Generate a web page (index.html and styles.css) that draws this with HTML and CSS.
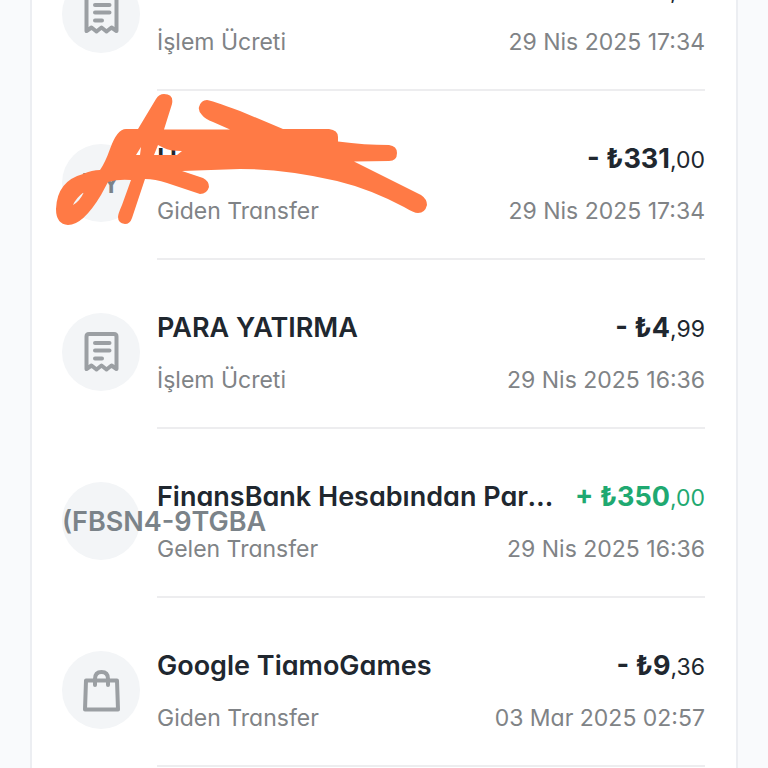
FILE: index.html
```
<!DOCTYPE html>
<html lang="tr">
<head>
  <meta charset="UTF-8">
  <meta name="viewport" content="width=device-width, initial-scale=1">
  <title>Hesap Hareketleri</title>
  <link rel="stylesheet" href="styles.css">
</head>
<body>

<!-- shared icons -->
<svg class="sprite" aria-hidden="true">
  <symbol id="receipt" viewBox="0 0 40 44">
    <path d="M5.500 39V6.500Q5.500 4 8 4H33Q35.500 4 35.500 6.500V39L30.500 35.500L25.500 39.500L20.500 35.500L15.500 39.500L10.500 35.500Z"/>
    <path d="M14 13H28.500M14 20.500H28.500M14 28.500H21"/>
  </symbol>
  <symbol id="bag" viewBox="0 0 40 44">
    <path d="M5 12.500H36L37 41.500H4Z"/>
    <path d="M14 17V11Q14 4 20.500 4Q27 4 27 11V17"/>
  </symbol>
</svg>

<main class="card">
  <ul class="list">
    <li class="item">
      <div class="avatar"><svg class="icon"><use href="#receipt"/></svg></div>
      <div class="body">
        <div class="line">
          <span class="title">PARA YATIRMA</span>
          <span class="amount">- ₺4<span class="cents">,99</span></span>
        </div>
        <div class="line sub">
          <span>İşlem Ücreti</span>
          <time>29 Nis 2025 17:34</time>
        </div>
      </div>
    </li>

    <li class="item">
      <div class="avatar"><span class="initials">HY</span></div>
      <div class="body">
        <div class="line">
          <span class="title">H</span>
          <span class="amount">- ₺331<span class="cents">,00</span></span>
        </div>
        <div class="line sub">
          <span>Giden Transfer</span>
          <time>29 Nis 2025 17:34</time>
        </div>
      </div>
      <!-- marker over the name -->
      <svg class="scribble" viewBox="50 91 380 140" aria-hidden="true">
        <path fill-rule="evenodd" d="M164 94Q174 94 172 104L164 129.500H230L213 122Q205 119 202 115Q198 111 199 107Q201 100 207 100Q210 100 240 111L283 129H329Q338 130 338 137V141.500Q365 145 389 145Q397 146 397 153Q397 161 389 161L354 161.500L387 178L421 195Q427 199 427 205Q425 213 418 213Q414 213 404 207Q370 189 337 181Q285 169 240 169L182 171L203 178Q209 181 209 187Q207 194 200 194L167 183Q155 179 145 179L132 218Q130 224 125 224Q118 223 118 217Q118 214 122 205L131 180Q118 179 108 182L101 195Q83 225 68 225Q56 224 56 209Q57 181 83 174Q92 170 100 170Q105 163 110 149Q117 129 126 129H138L156 99Q159 94 164 94ZM84 192Q76 198 73 205Q80 201 84 192ZM141 147L136 155H140ZM158 145L154 155H177L182 151Q169 151 164 148Z"/>
      </svg>
    </li>

    <li class="item">
      <div class="avatar"><svg class="icon"><use href="#receipt"/></svg></div>
      <div class="body">
        <div class="line">
          <span class="title">PARA YATIRMA</span>
          <span class="amount">- ₺4<span class="cents">,99</span></span>
        </div>
        <div class="line sub">
          <span>İşlem Ücreti</span>
          <time>29 Nis 2025 16:36</time>
        </div>
      </div>
    </li>

    <li class="item">
      <div class="avatar"><span class="initials">(FBSN4-9TGBA</span></div>
      <div class="body">
        <div class="line">
          <span class="title">FinansBank Hesabından Para Transferi</span>
          <span class="amount incoming">+ ₺350<span class="cents">,00</span></span>
        </div>
        <div class="line sub">
          <span>Gelen Transfer</span>
          <time>29 Nis 2025 16:36</time>
        </div>
      </div>
    </li>

    <li class="item">
      <div class="avatar"><svg class="icon"><use href="#bag"/></svg></div>
      <div class="body">
        <div class="line">
          <span class="title">Google TiamoGames</span>
          <span class="amount">- ₺9<span class="cents">,36</span></span>
        </div>
        <div class="line sub">
          <span>Giden Transfer</span>
          <time>03 Mar 2025 02:57</time>
        </div>
      </div>
    </li>
  </ul>
</main>

</body>
</html>
```
FILE: styles.css
```
* {
  box-sizing: border-box;
}

body {
  margin: 0;
  height: 100vh;
  overflow: hidden;
  background: #f9fafc;
  color: #20272f;
  font-family: Inter, "Liberation Sans", sans-serif;
  font-feature-settings: "cv11";
}

.sprite {
  display: none;
}

.card {
  display: flow-root;
  min-height: 100vh;
  margin: 0 30px;
  padding: 0 31px 0 30px;
  background: #fff;
  border: solid #eceef2;
  border-width: 0 2px;
}

/* list is scrolled part of the way into the first row */
.list {
  list-style: none;
  margin: -78px 0 0;
  padding: 0;
}

.item {
  position: relative;
  display: flex;
  gap: 17px;
}

.avatar {
  flex: none;
  display: flex;
  align-items: center;
  width: 78px;
  height: 78px;
  margin-top: 53px;
  border-radius: 50%;
  background: #f3f5f7;
}

.icon {
  width: 40px;
  height: 44px;
  margin: 0 auto;
  fill: none;
  stroke: #9b9fa3;
  stroke-width: 4;
  stroke-linecap: round;
  stroke-linejoin: round;
}

.initials {
  min-width: 100%;
  text-align: center;
  white-space: nowrap;
  color: #7b8389;
  font-size: 27px;
  font-weight: 600;
}

.body {
  flex: 1;
  min-width: 0;
  padding: 50px 0 31px;
  border-bottom: 2px solid #ededef;
}

.line {
  display: flex;
  justify-content: space-between;
  align-items: baseline;
  gap: 12px;
  line-height: 36px;
}

.title {
  overflow: hidden;
  text-overflow: ellipsis;
  white-space: nowrap;
  font-size: 27px;
  font-weight: 600;
}

.amount {
  flex: none;
  font-size: 27px;
  font-weight: 700;
}

.amount.incoming {
  color: #1fa971;
}

.cents {
  font-size: 23px;
  font-weight: 400;
  line-height: 1;
}

.sub {
  margin-top: 18px;
  line-height: 32px;
  color: #808386;
  font-size: 23px;
}

.scribble {
  position: absolute;
  top: 0;
  left: -12px;
  width: 380px;
  height: 140px;
  fill: #ff7a45;
}
```
